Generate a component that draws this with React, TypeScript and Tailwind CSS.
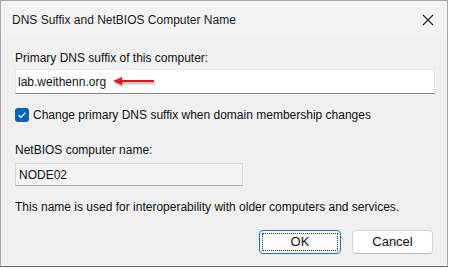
import React from 'react';

const font = { fontFamily: '"Liberation Sans", Arial, sans-serif' };

export default function App() {
  return (
    <div className="w-[450px] h-[270px] bg-white text-[12px] text-[#111]" style={font}>
      <div className="flex h-[267px] w-[448px] flex-col border border-[#a8a8a8] border-b-[#5c5c5c] bg-[#f0f0f0] shadow-[inset_0_-1px_0_#ffffff]">
        {/* title bar */}
        <div className="flex h-[35px] items-center justify-between bg-[#f3f3f3] pl-[11px] pr-[13px]">
          <span className="pt-[3px] text-[12px] leading-none text-[#1a1a1a]">DNS Suffix and NetBIOS Computer Name</span>
          <svg width="12" height="12" viewBox="0 0 12 12" className="mt-[2px]">
            <path d="M1 1 L11 11 M11 1 L1 11" stroke="#222" strokeWidth="1.1" />
          </svg>
        </div>

        <div className="flex flex-col px-[14px]">
          <div className="mt-[14px] leading-[16px]">Primary DNS suffix of this computer:</div>

          <div className="relative mt-[3px] flex h-[25px] w-[420px] items-center border border-[#e6e6e6] border-b-[#8a8a8a] bg-white pl-[2px]">
            <span>lab.weithenn.org</span>
            <svg
              width="44"
              height="12"
              viewBox="0 0 44 12"
              className="absolute left-[96px] top-[5px] drop-shadow-[1px_2px_1px_rgba(0,0,0,0.35)]"
            >
              <path d="M8 6 H42" stroke="#e8141c" strokeWidth="2" />
              <path d="M1 6 L10 2 L10 10 Z" fill="#e8141c" />
            </svg>
          </div>

          <div className="mt-[13px] flex h-[15px] items-center gap-[4px]">
            <span className="flex h-[14px] w-[14px] items-center justify-center rounded-[3px] bg-[#0a64b4]">
              <svg width="10" height="10" viewBox="0 0 10 10">
                <path d="M1.8 5.2 L4 7.3 L8.3 2.6" fill="none" stroke="#fff" strokeWidth="1.2" />
              </svg>
            </span>
            <span className="leading-[16px]">Change primary DNS suffix when domain membership changes</span>
          </div>

          <div className="mt-[20px] leading-[16px]">NetBIOS computer name:</div>

          <div className="mt-[5px] flex h-[23px] w-[228px] items-center border border-[#d8d8d8] border-b-[#a6a6a6] bg-[#f3f3f3] pl-[3px]">
            NODE02
          </div>

          <div className="mt-[13px] leading-[16px]">
            This name is used for interoperability with older computers and services.
          </div>

          <div className="mt-[15px] flex justify-end gap-[11px]">
            <button
              type="button"
              className="flex h-[24px] w-[82px] items-center justify-center rounded-[4px] border border-[#1a6fc2] bg-white p-[2px]"
            >
              <span className="flex h-full w-full items-center justify-center border border-dotted border-[#333] text-[13px]">
                OK
              </span>
            </button>
            <button
              type="button"
              className="flex h-[24px] w-[81px] items-center justify-center rounded-[4px] border border-[#d4d4d4] border-b-[#b8b8b8] bg-white text-[13px]"
            >
              Cancel
            </button>
          </div>
        </div>
      </div>
    </div>
  );
}
